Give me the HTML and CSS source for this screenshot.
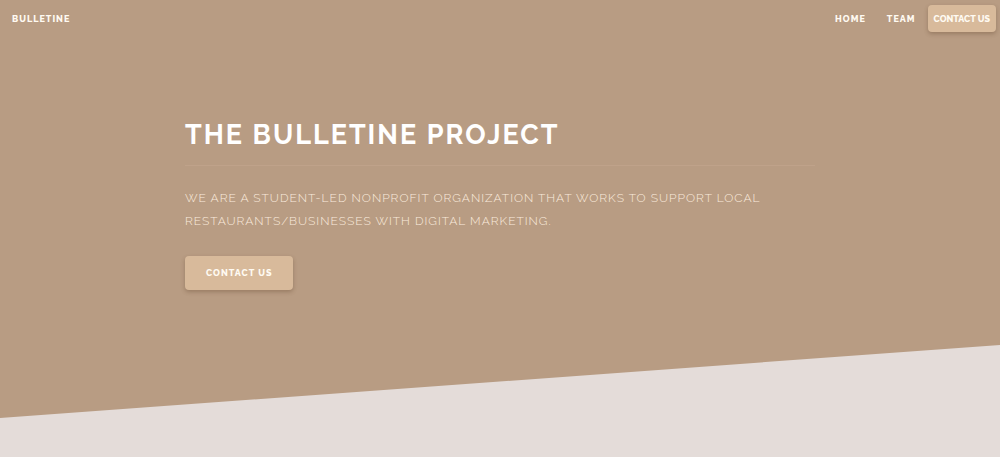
FILE: index.html
```html
<!DOCTYPE html>
<html lang="en">
<head>
  <meta charset="utf-8">
  <meta name="viewport" content="width=device-width, initial-scale=1">
  <title>The Bulletine Project</title>
  <link rel="stylesheet" href="styles.css">
</head>
<body>
  <div class="hero">
    <header class="topbar">
      <a class="brand" href="#">BULLETINE</a>
      <nav class="nav">
        <a class="nav-link" href="#">HOME</a>
        <a class="nav-link" href="#">TEAM</a>
        <button class="button button-small" type="button">CONTACT US</button>
      </nav>
    </header>
    <main class="intro">
      <h1 class="title">THE BULLETINE PROJECT</h1>
      <p class="lead">WE ARE A STUDENT-LED NONPROFIT ORGANIZATION THAT WORKS TO SUPPORT LOCAL RESTAURANTS/BUSINESSES WITH DIGITAL MARKETING.</p>
      <button class="button button-large" type="button">CONTACT US</button>
    </main>
  </div>
</body>
</html>
```
FILE: styles.css
```css
* {
  box-sizing: border-box;
}

body {
  margin: 0;
  background: #e4dcd9;
  color: #fff;
  font-family: Raleway, Lato, "Open Sans", sans-serif;
}

.hero {
  padding-bottom: 128px;
  background: #b89c83;
  clip-path: polygon(0 0, 100% 0, 100% calc(100% - 7.3vw), 0 100%);
}

.topbar {
  display: flex;
  align-items: center;
  justify-content: space-between;
  padding: 5px 4px 5px 12px;
}

.brand,
.nav-link {
  color: #fffaf2;
  font-size: 9px;
  font-weight: 800;
  line-height: 16px;
  letter-spacing: 1px;
  text-decoration: none;
}

.nav {
  display: flex;
  align-items: center;
}

.nav-link {
  margin-right: 21px;
}

.nav-link + .nav-link {
  margin-right: 12px;
}

.button {
  border: 0;
  border-radius: 4px;
  background: #d8ba9b;
  box-shadow: 0 2px 4px rgba(80, 50, 25, 0.3);
  color: #fffaf2;
  font-family: inherit;
  font-size: 9px;
  font-weight: 800;
  cursor: pointer;
}

.button-small {
  height: 27px;
  padding: 0 6px;
}

.button-large {
  height: 34px;
  padding: 0 21px;
  letter-spacing: 1px;
}

.intro {
  width: 64%;
  max-width: 630px;
  margin: 0 auto;
  padding-top: 79px;
}

.title {
  margin: 0;
  padding-bottom: 11px;
  border-bottom: 1px solid #bfa28a;
  font-size: 27px;
  font-weight: 700;
  line-height: 38px;
  letter-spacing: 2px;
}

.lead {
  margin: 21px 0 23px;
  color: #faebdd;
  font-size: 12px;
  font-weight: 300;
  line-height: 23px;
  letter-spacing: 1px;
}
```
